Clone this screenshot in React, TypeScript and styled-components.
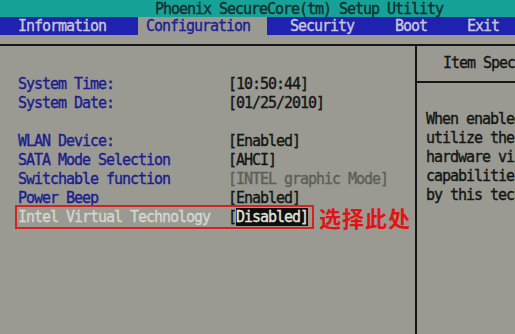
import React, { FC } from 'react'
import styled, { createGlobalStyle } from 'styled-components'

const GlobalStyle = createGlobalStyle`
html, body {
    margin: 0;
    padding: 0;
    background: #9a9a92;
}
body {
    width: 515px;
    height: 334px;
    overflow: hidden;
}
`

const Screen = styled.div`
width: 515px;
height: 334px;
overflow: hidden;
background: #9a9a92;
font-family: "DejaVu Sans Mono", "Liberation Mono", monospace;
font-size: 15px;
letter-spacing: -1.03px;
-webkit-text-stroke: 0.35px currentColor;
display: flex;
flex-direction: column;
`

const TitleBar = styled.div`
height: 17px;
flex: none;
background: #17a298;
color: #10302c;
line-height: 18px;
padding-left: 155px;
white-space: nowrap;
`

const MenuBar = styled.div`
height: 18px;
flex: none;
background: #1e22ae;
display: flex;
align-items: stretch;
white-space: nowrap;
`

const MenuItem = styled.div<{ active?: boolean; left: number; right: number }>`
padding-left: ${p => p.left}px;
padding-right: ${p => p.right}px;
line-height: 19px;
color: ${p => p.active ? '#1e1e96' : '#c6c8d6'};
background: ${p => p.active ? '#9a9a92' : 'transparent'};
`

const Body = styled.div`
flex: 1;
margin-top: 9px;
border-top: 2px solid #161616;
display: flex;
`

const MainPanel = styled.div`
width: 415px;
flex: none;
border-right: 2px solid #161616;
padding-top: 29px;
display: flex;
flex-direction: column;
`

const Row = styled.div<{ gap?: boolean }>`
display: flex;
height: 19px;
line-height: 19px;
padding-left: 18px;
margin-top: ${p => p.gap ? '19px' : '0'};
white-space: nowrap;
`

const Label = styled.span<{ dim?: boolean }>`
width: 210px;
flex: none;
color: ${p => p.dim ? '#d6d6ce' : '#1c1c8e'};
`

const Value = styled.span<{ dim?: boolean }>`
color: ${p => p.dim ? '#5e5e58' : '#141414'};
`

const Cursor = styled.span`
background: #0e0e0e;
color: #e4e4de;
`

const MarkedRow = styled.div`
display: flex;
align-items: center;
margin-top: -3px;
padding-left: 15px;
white-space: nowrap;
`

const RedBox = styled.div`
width: 294px;
height: 20px;
border: 2px solid #d42222;
display: flex;
align-items: center;
padding-left: 1px;
line-height: 19px;
`

const Note = styled.span`
margin-left: 5px;
color: #e01414;
font-family: "Noto Sans CJK SC", sans-serif;
font-size: 22px;
font-weight: bold;
letter-spacing: 1px;
line-height: 24px;
-webkit-text-stroke: 0;
`

const HelpPanel = styled.div`
flex: 1;
display: flex;
flex-direction: column;
overflow: hidden;
`

const HelpHeader = styled.div`
height: 35px;
flex: none;
line-height: 35px;
padding-left: 26px;
border-bottom: 2px solid #161616;
color: #141414;
white-space: nowrap;
`

const HelpText = styled.div`
padding: 27px 0 0 9px;
color: #141414;
line-height: 19px;
white-space: nowrap;
`

const rows: { label: string; value: string; gap?: boolean; dim?: boolean }[] = [
    { label: 'System Time:', value: '[10:50:44]' },
    { label: 'System Date:', value: '[01/25/2010]' },
    { label: 'WLAN Device:', value: '[Enabled]', gap: true },
    { label: 'SATA Mode Selection', value: '[AHCI]' },
    { label: 'Switchable function', value: '[INTEL graphic Mode]', dim: true },
    { label: 'Power Beep', value: '[Enabled]' },
]

const help = [
    'When enabled, a VMM can',
    'utilize the additional',
    'hardware virtualization',
    'capabilities provided',
    'by this technology.',
]

const App: FC = () => {
    return (
        <>
            <GlobalStyle />
            <Screen>
                <TitleBar>Phoenix SecureCore(tm) Setup Utility</TitleBar>
                <MenuBar>
                    <MenuItem left={18} right={32}>Information</MenuItem>
                    <MenuItem active left={8} right={17}>Configuration</MenuItem>
                    <MenuItem left={23} right={41}>Security</MenuItem>
                    <MenuItem left={0} right={40}>Boot</MenuItem>
                    <MenuItem left={0} right={0}>Exit</MenuItem>
                </MenuBar>
                <Body>
                    <MainPanel>
                        {rows.map(r => (
                            <Row key={r.label} gap={r.gap}>
                                <Label>{r.label}</Label>
                                <Value dim={r.dim}>{r.value}</Value>
                            </Row>
                        ))}
                        <MarkedRow>
                            <RedBox>
                                <Label dim>Intel Virtual Technology</Label>
                                <Value>[<Cursor>Disabled]</Cursor></Value>
                            </RedBox>
                            <Note>选择此处</Note>
                        </MarkedRow>
                    </MainPanel>
                    <HelpPanel>
                        <HelpHeader>Item Specific Help</HelpHeader>
                        <HelpText>
                            {help.map(h => <div key={h}>{h}</div>)}
                        </HelpText>
                    </HelpPanel>
                </Body>
            </Screen>
        </>
    )
}

export default App
